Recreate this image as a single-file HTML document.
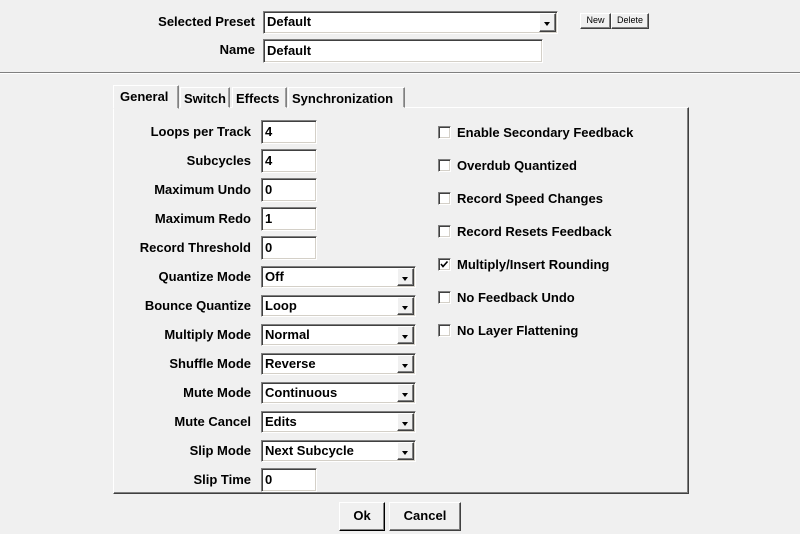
<!DOCTYPE html>
<html><head><style>
*{box-sizing:border-box;margin:0;padding:0}
body{width:800px;height:534px;background:#f0f0f0;position:relative;overflow:hidden;font-family:"Liberation Sans",Arial,sans-serif;font-weight:bold;font-size:13px;color:#000}
.a{position:absolute}
.lbl{position:absolute;text-align:right;white-space:nowrap;line-height:16px}
.inp{position:absolute;background:#fff;border:1px solid;border-color:#808080 #fff #fff #808080;box-shadow:inset 1px 1px 0 #404040,inset -1px -1px 0 #d4d0c8;padding:2px 3px;line-height:18px}
.cb{position:absolute;background:#fff;border:1px solid;border-color:#808080 #fff #fff #808080;box-shadow:inset 1px 1px 0 #404040,inset -1px -1px 0 #d4d0c8;line-height:20px;padding:0 3px}
.cb .ar{position:absolute;right:1px;top:1px;bottom:1px;width:17px;background:#f0f0f0;border:1px solid;border-color:#fff #404040 #404040 #fff;box-shadow:inset -1px -1px 0 #808080}
.cb .ar:after{content:"";position:absolute;left:4px;top:8px;border-left:3.5px solid transparent;border-right:3.5px solid transparent;border-top:4px solid #000}
.btn{position:absolute;background:#f0f0f0;border:1px solid;border-color:#fff #404040 #404040 #fff;box-shadow:inset -1px -1px 0 #808080;text-align:center}
.chk{position:absolute;width:13px;height:13px;background:#fff;border:1px solid;border-color:#808080 #fff #fff #808080;box-shadow:inset 1px 1px 0 #404040,inset -1px -1px 0 #d4d0c8}
.ct{position:absolute;left:457px;white-space:nowrap;line-height:16px}
.tab{position:absolute;top:87px;height:21px;border:1px solid;border-color:#fff #808080 transparent #fff;box-shadow:inset -1px 0 0 #a0a0a0;padding:3px 3px 0;line-height:16px;background:#f0f0f0}
</style></head><body>
<div class="lbl" style="right:545px;top:14px">Selected Preset</div>
<div class="cb" style="left:263px;top:11px;width:295px;height:23px">Default<div class="ar"></div></div>
<div class="lbl" style="right:545px;top:42px">Name</div>
<div class="inp" style="left:263px;top:39px;width:280px;height:24px;line-height:17px">Default</div>
<div class="btn" style="left:580px;top:13px;width:31px;height:16px;font-size:9px;font-weight:normal;line-height:13px">New</div>
<div class="btn" style="left:611px;top:13px;width:38px;height:16px;font-size:9px;font-weight:normal;line-height:13px">Delete</div>
<div class="a" style="left:0;top:72px;width:800px;height:2px;border-top:1px solid #808080;border-bottom:1px solid #fff"></div>

<div class="a" style="left:113px;top:107px;width:576px;height:387px;border:1px solid;border-color:#fff #404040 #404040 #fff;box-shadow:inset -1px -1px 0 #808080"></div>
<div class="tab" style="left:113px;top:85px;height:24px;width:66px;padding-left:6px">General</div>
<div class="tab" style="left:180px;width:50px">Switch</div>
<div class="tab" style="left:232px;width:55px">Effects</div>
<div class="tab" style="left:288px;width:117px">Synchronization</div>

<div class="lbl" style="right:549px;top:124px">Loops per Track</div><div class="inp" style="left:261px;top:120px;width:56px;height:24px">4</div>
<div class="lbl" style="right:549px;top:153px">Subcycles</div><div class="inp" style="left:261px;top:149px;width:56px;height:24px">4</div>
<div class="lbl" style="right:549px;top:182px">Maximum Undo</div><div class="inp" style="left:261px;top:178px;width:56px;height:24px">0</div>
<div class="lbl" style="right:549px;top:211px">Maximum Redo</div><div class="inp" style="left:261px;top:207px;width:56px;height:24px">1</div>
<div class="lbl" style="right:549px;top:240px">Record Threshold</div><div class="inp" style="left:261px;top:236px;width:56px;height:24px">0</div>
<div class="lbl" style="right:549px;top:269px">Quantize Mode</div><div class="cb" style="left:261px;top:266px;width:155px;height:22px">Off<div class="ar"></div></div>
<div class="lbl" style="right:549px;top:298px">Bounce Quantize</div><div class="cb" style="left:261px;top:295px;width:155px;height:22px">Loop<div class="ar"></div></div>
<div class="lbl" style="right:549px;top:327px">Multiply Mode</div><div class="cb" style="left:261px;top:324px;width:155px;height:22px">Normal<div class="ar"></div></div>
<div class="lbl" style="right:549px;top:356px">Shuffle Mode</div><div class="cb" style="left:261px;top:353px;width:155px;height:22px">Reverse<div class="ar"></div></div>
<div class="lbl" style="right:549px;top:385px">Mute Mode</div><div class="cb" style="left:261px;top:382px;width:155px;height:22px">Continuous<div class="ar"></div></div>
<div class="lbl" style="right:549px;top:414px">Mute Cancel</div><div class="cb" style="left:261px;top:411px;width:155px;height:22px">Edits<div class="ar"></div></div>
<div class="lbl" style="right:549px;top:443px">Slip Mode</div><div class="cb" style="left:261px;top:440px;width:155px;height:22px">Next Subcycle<div class="ar"></div></div>
<div class="lbl" style="right:549px;top:472px">Slip Time</div><div class="inp" style="left:261px;top:468px;width:56px;height:24px">0</div>

<div class="chk" style="left:438px;top:126px"></div><div class="ct" style="top:125px">Enable Secondary Feedback</div>
<div class="chk" style="left:438px;top:159px"></div><div class="ct" style="top:158px">Overdub Quantized</div>
<div class="chk" style="left:438px;top:192px"></div><div class="ct" style="top:191px">Record Speed Changes</div>
<div class="chk" style="left:438px;top:225px"></div><div class="ct" style="top:224px">Record Resets Feedback</div>
<div class="chk" style="left:438px;top:258px"><svg width="11" height="11" style="position:absolute;left:0;top:0"><path d="M2 5 L4 7.5 L8.5 2.5" stroke="#000" stroke-width="1.6" fill="none"/></svg></div><div class="ct" style="top:257px">Multiply/Insert Rounding</div>
<div class="chk" style="left:438px;top:291px"></div><div class="ct" style="top:290px">No Feedback Undo</div>
<div class="chk" style="left:438px;top:324px"></div><div class="ct" style="top:323px">No Layer Flattening</div>

<div class="btn" style="left:339px;top:502px;width:46px;height:29px;line-height:26px;border-color:#fff #000 #000 #fff">Ok</div>
<div class="btn" style="left:389px;top:502px;width:72px;height:29px;line-height:26px">Cancel</div>
</body></html>
